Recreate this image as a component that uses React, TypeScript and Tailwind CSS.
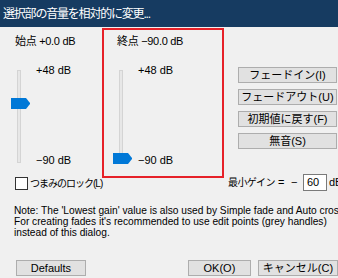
import React from "react";

const F = "font-['Liberation_Sans','Noto_Sans_CJK_JP',sans-serif]";

function Slider({ thumbTop }: { thumbTop: number }) {
  return (
    <div className="relative w-[20px] h-[94px] shrink-0">
      <div className="absolute left-[6px] top-0 w-[4px] h-[93px] bg-[#e7e7e7] border border-[#d4d4d4]" />
      <svg
        className="absolute left-0"
        style={{ top: thumbTop }}
        width="20"
        height="11"
        viewBox="0 0 20 11"
      >
        <polygon points="0,0 15,0 19,5 19,6 15,11 0,11" fill="#0078d7" />
      </svg>
    </div>
  );
}

function SliderBlock({ label, thumbTop }: { label: string; thumbTop: number }) {
  return (
    <div className="flex flex-col">
      <div className="ml-[4px] h-[13px] leading-[13px] text-[11px] whitespace-nowrap tracking-[-0.3px]">{label}</div>
      <div className="flex mt-[22px]">
        <Slider thumbTop={thumbTop} />
        <div className="ml-[5px] mt-[-6px] h-[103px] flex flex-col justify-between text-[11px] leading-[13px] whitespace-nowrap">
          <div>+48 dB</div>
          <div>−90 dB</div>
        </div>
      </div>
    </div>
  );
}

function Btn({ children, className = "" }: { children: React.ReactNode; className?: string }) {
  return (
    <div
      className={
        "h-[16px] bg-[#e1e1e1] border border-[#adadad] flex items-center justify-center text-[11px] leading-[13px] whitespace-nowrap " +
        className
      }
    >
      {children}
    </div>
  );
}

export default function App() {
  return (
    <div className={"w-[338px] h-[278px] bg-[#f0f0f0] overflow-hidden text-black " + F}>
      <div className="h-[27px] bg-[#163b61] text-white flex items-center pl-[3px] text-[12px] tracking-[-1.2px] whitespace-nowrap">
        選択部の音量を相対的に変更...
      </div>

      <div className="flex items-start mt-[1px]">
        {/* left column */}
        <div className="w-[102px] shrink-0 pl-[11px] pt-[7px] flex flex-col">
          <SliderBlock label="始点 +0.0 dB" thumbTop={28} />
          <div className="flex items-center mt-[10px] ml-[4px]">
            <div className="w-[13px] h-[13px] bg-white border border-[#333333] shrink-0" />
            <span className="ml-[2px] text-[10px] leading-[13px] tracking-[-1px] whitespace-nowrap">つまみのロック(L)</span>
          </div>
        </div>

        {/* red box */}
        <div className="w-[122px] h-[150px] shrink-0 border-2 border-[#e62128] pl-[9px] pt-[5px]">
          <SliderBlock label="終点 −90.0 dB" thumbTop={83} />
        </div>

        {/* buttons */}
        <div className="ml-[14px] w-[99px] shrink-0 pt-[39px] flex flex-col">
          <div className="flex flex-col gap-[6px]">
            <Btn>フェードイン(I)</Btn>
            <Btn>フェードアウト(U)</Btn>
            <Btn>初期値に戻す(F)</Btn>
            <Btn>無音(S)</Btn>
          </div>
          <div className="mt-[25px] ml-[-10px] flex items-center text-[11px] leading-[13px] whitespace-nowrap">
            <span className="w-[50px] shrink-0 text-[10px] tracking-[-0.6px]">最小ゲイン</span>
            <span className="w-[13px] shrink-0">=</span>
            <span className="w-[12px] shrink-0">−</span>
            <div className="w-[24px] h-[17px] shrink-0 bg-white border border-[#7a7a7a] flex items-center pl-[3px]">60</div>
            <span className="ml-[2px]">dB</span>
          </div>
        </div>
      </div>

      <div className="mt-[14px] pl-[14px] text-[10.2px] leading-[11px] whitespace-nowrap">
        <div>Note: The 'Lowest gain' value is also used by Simple fade and Auto crossfade.</div>
        <div>For creating fades it's recommended to use edit points (grey handles)</div>
        <div>instead of this dialog.</div>
      </div>

      <div className="mt-[22px] flex">
        <Btn className="ml-[16px] w-[72px]">Defaults</Btn>
        <Btn className="ml-[102px] w-[65px]">OK(O)</Btn>
        <Btn className="ml-[7px] w-[80px] shrink-0">キャンセル(C)</Btn>
      </div>
    </div>
  );
}
